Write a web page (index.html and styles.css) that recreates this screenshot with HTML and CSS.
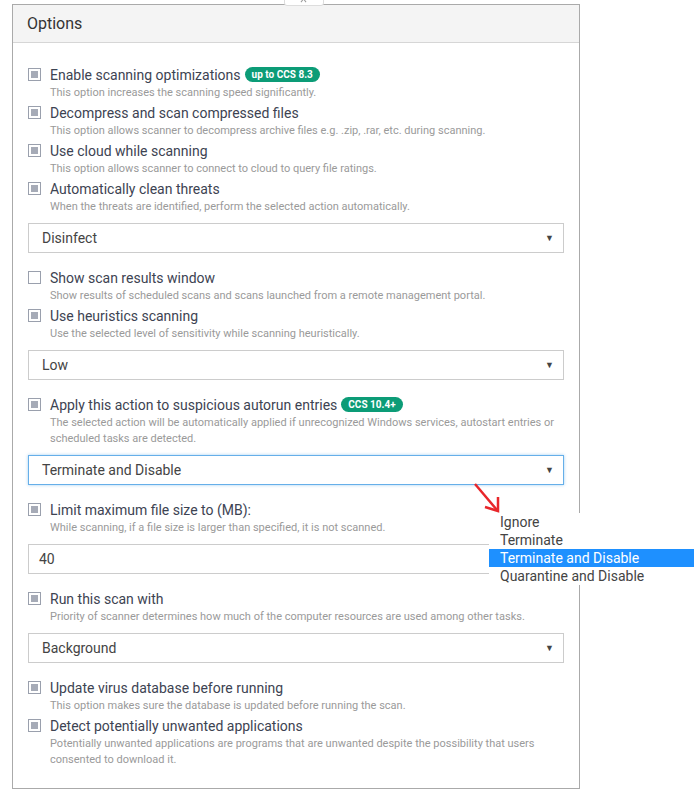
FILE: index.html
```html
<!DOCTYPE html>
<html lang="en">
<head>
  <meta charset="UTF-8">
  <title>Options</title>
  <link rel="stylesheet" href="styles.css">
</head>
<body>

  <div class="tab"></div>

  <div class="panel">
    <div class="panel-header">Options</div>
    <div class="panel-body">

      <div class="option">
        <div class="option-label"><span class="check checked"></span>Enable scanning optimizations <span class="badge">up to CCS 8.3</span></div>
        <div class="option-desc">This option increases the scanning speed significantly.</div>
      </div>
      <div class="option">
        <div class="option-label"><span class="check checked"></span>Decompress and scan compressed files</div>
        <div class="option-desc">This option allows scanner to decompress archive files e.g. .zip, .rar, etc. during scanning.</div>
      </div>
      <div class="option">
        <div class="option-label"><span class="check checked"></span>Use cloud while scanning</div>
        <div class="option-desc">This option allows scanner to connect to cloud to query file ratings.</div>
      </div>
      <div class="option">
        <div class="option-label"><span class="check checked"></span>Automatically clean threats</div>
        <div class="option-desc">When the threats are identified, perform the selected action automatically.</div>
      </div>

      <div class="select"><span>Disinfect</span><span class="caret">&#9660;</span></div>

      <div class="option">
        <div class="option-label"><span class="check"></span>Show scan results window</div>
        <div class="option-desc">Show results of scheduled scans and scans launched from a remote management portal.</div>
      </div>
      <div class="option">
        <div class="option-label"><span class="check checked"></span>Use heuristics scanning</div>
        <div class="option-desc">Use the selected level of sensitivity while scanning heuristically.</div>
      </div>

      <div class="select"><span>Low</span><span class="caret">&#9660;</span></div>

      <div class="option">
        <div class="option-label"><span class="check checked"></span>Apply this action to suspicious autorun entries <span class="badge">CCS 10.4+</span></div>
        <div class="option-desc">The selected action will be automatically applied if unrecognized Windows services, autostart entries or scheduled tasks are detected.</div>
      </div>

      <div class="select focused"><span>Terminate and Disable</span><span class="caret">&#9660;</span></div>

      <div class="option">
        <div class="option-label"><span class="check checked"></span>Limit maximum file size to (MB):</div>
        <div class="option-desc">While scanning, if a file size is larger than specified, it is not scanned.</div>
      </div>

      <div class="select input"><span>40</span></div>

      <div class="option">
        <div class="option-label"><span class="check checked"></span>Run this scan with</div>
        <div class="option-desc">Priority of scanner determines how much of the computer resources are used among other tasks.</div>
      </div>

      <div class="select"><span>Background</span><span class="caret">&#9660;</span></div>

      <div class="option">
        <div class="option-label"><span class="check checked"></span>Update virus database before running</div>
        <div class="option-desc">This option makes sure the database is updated before running the scan.</div>
      </div>
      <div class="option">
        <div class="option-label"><span class="check checked"></span>Detect potentially unwanted applications</div>
        <div class="option-desc">Potentially unwanted applications are programs that are unwanted despite the possibility that users consented to download it.</div>
      </div>

    </div>
  </div>

  <!-- annotation arrow -->
  <svg class="arrow" width="30" height="32" viewBox="0 0 30 32">
    <path d="M2 2 L24 28" stroke="#e8262a" stroke-width="2.5" fill="none"/>
    <path d="M12 25 L25 29 L25 15" stroke="#e8262a" stroke-width="2.5" fill="none"/>
  </svg>

  <!-- open dropdown list -->
  <ul class="dropdown">
    <li>Ignore</li>
    <li>Terminate</li>
    <li class="active">Terminate and Disable</li>
    <li>Quarantine and Disable</li>
  </ul>

</body>
</html>
```

FILE: styles.css
```css
body {
  margin: 0;
  padding: 4px 0 0 12px;
  font-family: 'Roboto', sans-serif;
  background: #fff;
  position: relative;
}

/* close tab peeking above the panel */
.tab {
  position: absolute;
  left: 284px;
  top: -9px;
  width: 38px;
  height: 13px;
  background: #fff;
  border: 1px solid #ddd;
  border-radius: 0 0 3px 3px;
  z-index: 2;
}

.tab::before,
.tab::after {
  content: "";
  position: absolute;
  left: 18px;
  top: 3px;
  width: 1px;
  height: 8px;
  background: #999;
  transform: rotate(40deg);
}

.tab::after {
  transform: rotate(-40deg);
}

.panel {
  width: 566px;
  border: 1px solid #aaa;
}

.panel-header {
  height: 37px;
  line-height: 37px;
  background: #f4f4f4;
  border-bottom: 1px solid #d6d6d6;
  padding-left: 14px;
  font-size: 16px;
  color: #333;
}

.panel-body {
  padding: 22px 15px 18px 15px;
}

.option {
  margin-bottom: 2px;
}

.option-label {
  display: flex;
  align-items: center;
  height: 19px;
  font-size: 14px;
  color: #3d4352;
  white-space: nowrap;
}

.check {
  width: 11px;
  height: 11px;
  border: 1px solid #9aa0ad;
  margin-right: 9px;
  position: relative;
  background: #fff;
  flex-shrink: 0;
}

.check.checked::after {
  content: "";
  position: absolute;
  left: 2px;
  top: 2px;
  width: 7px;
  height: 7px;
  background: #a6abb7;
}

.badge {
  display: inline-block;
  margin-left: 4px;
  padding: 0 7px;
  height: 15px;
  line-height: 15px;
  border-radius: 8px;
  background: #0c9c77;
  color: #fff;
  font-size: 10px;
  font-weight: bold;
}

.option-desc {
  padding: 1px 0 0 22px;
  font-size: 11px;
  line-height: 16px;
  color: #9a9a9a;
}

.select {
  display: flex;
  justify-content: space-between;
  align-items: center;
  height: 28px;
  margin: 8px 0 15px 0;
  padding: 0 9px 0 13px;
  border: 1px solid #ccc;
  font-size: 14px;
  color: #444;
}

.select.input {
  padding-left: 10px;
}

.select.focused {
  border-color: #66afe9;
  box-shadow: 0 0 3px rgba(102, 175, 233, 0.6);
}

.caret {
  font-size: 9px;
  color: #444;
}

.arrow {
  position: absolute;
  left: 473px;
  top: 482px;
}

.dropdown {
  position: absolute;
  left: 489px;
  top: 513px;
  width: 205px;
  margin: 0;
  padding: 0;
  list-style: none;
  background: #fff;
  font-size: 14px;
  color: #444;
}

.dropdown li {
  height: 18px;
  line-height: 18px;
  padding-left: 11px;
}

.dropdown li.active {
  background: #1e90ff;
  color: #fff;
}
```
